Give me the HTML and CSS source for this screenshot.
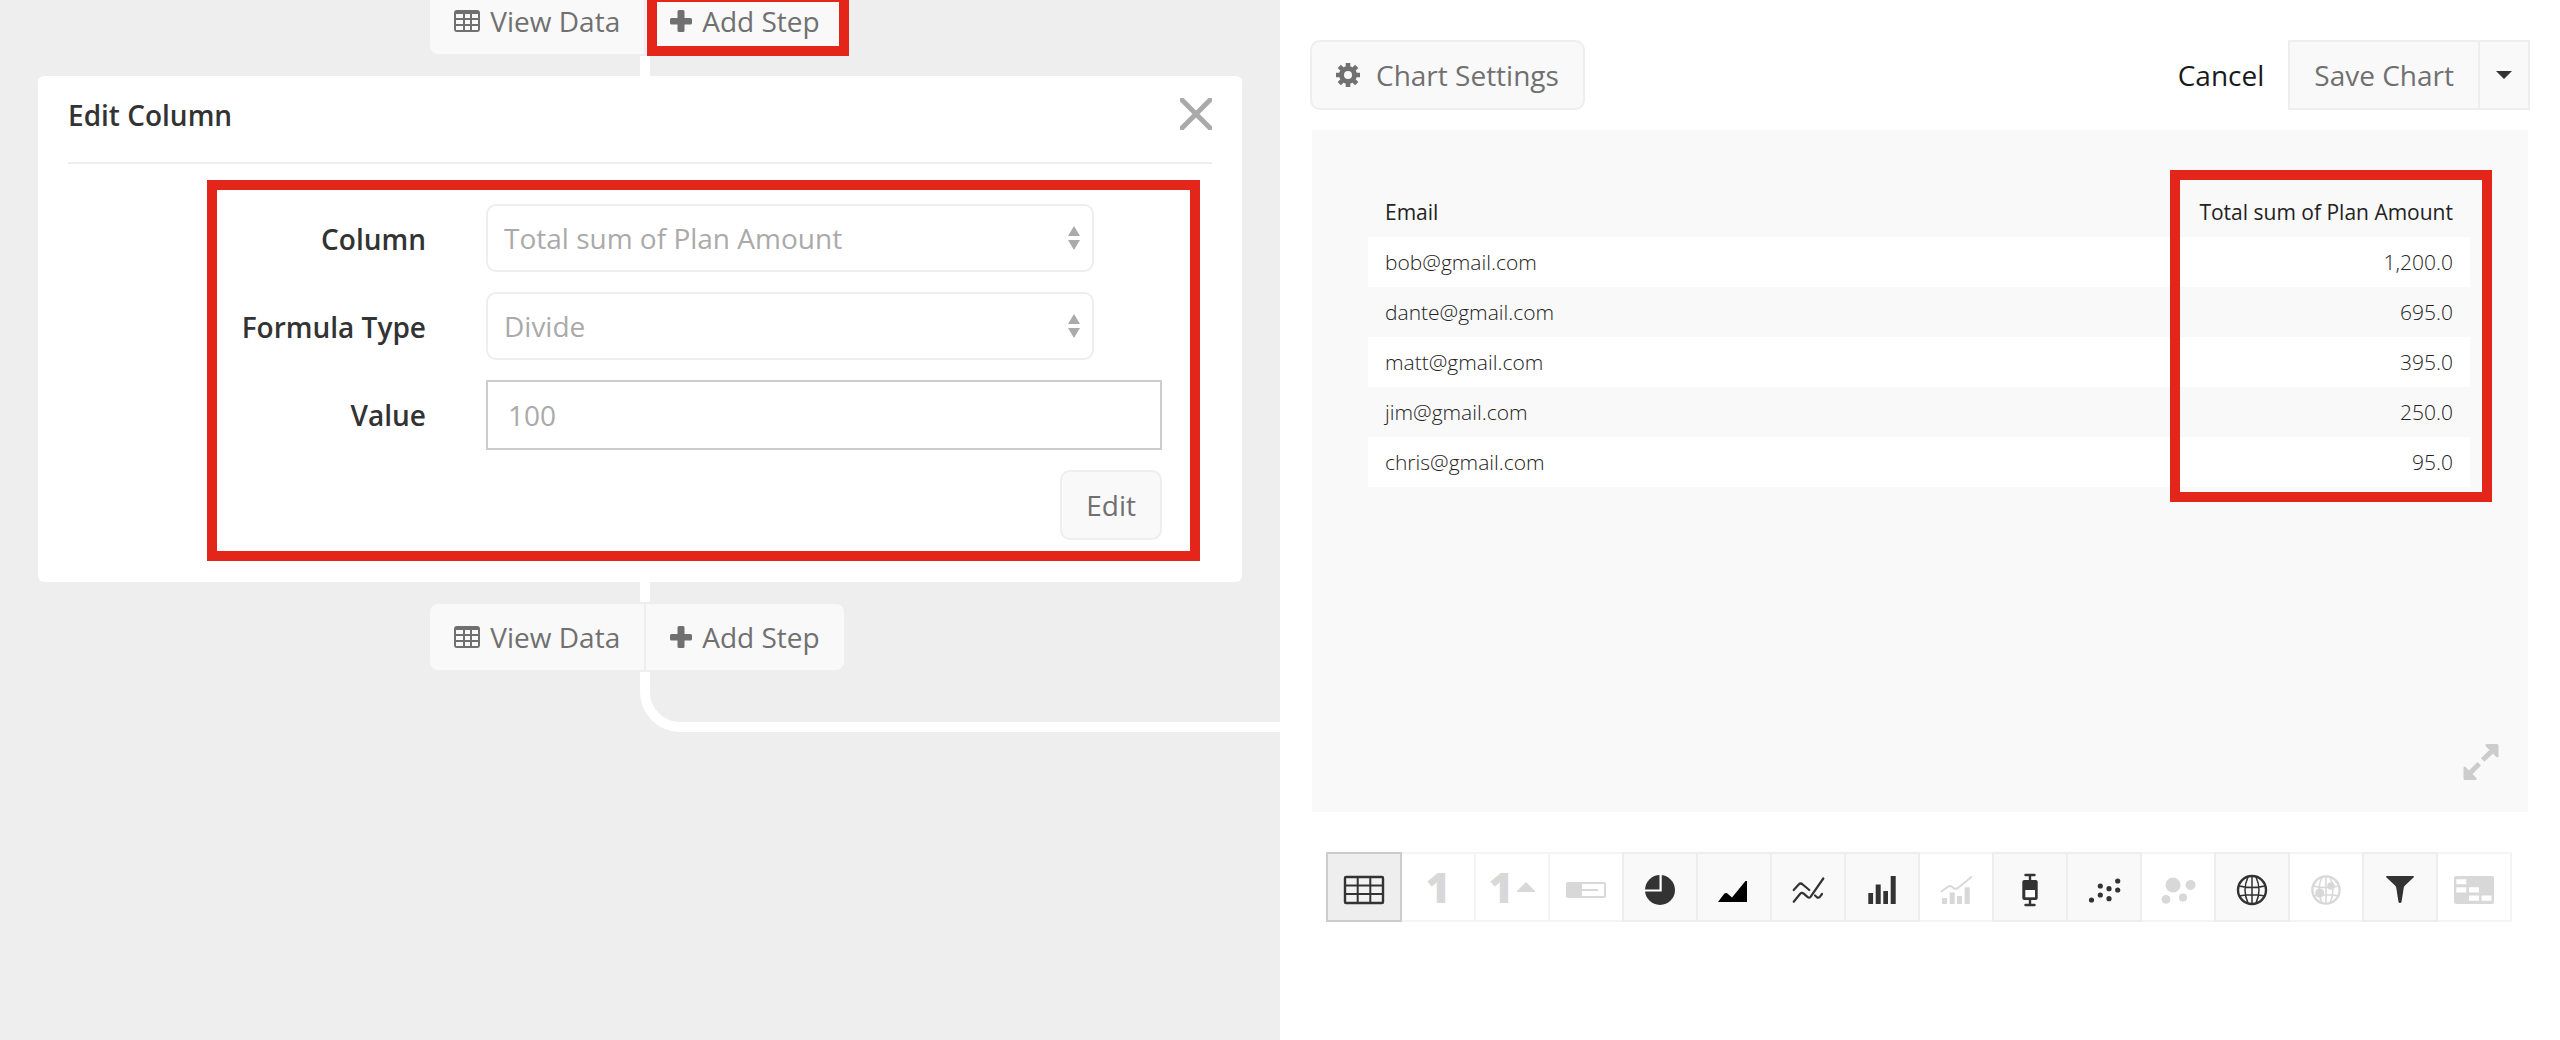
FILE: index.html
```html
<!DOCTYPE html>
<html lang="en">
<head>
<meta charset="utf-8">
<title>Edit Column</title>
<link rel="stylesheet" href="styles.css">
</head>
<body>
<svg class="sprite" aria-hidden="true">
  <symbol id="grid" viewBox="0 0 26 22"><path fill="currentColor" fill-rule="evenodd" d="M3 0h20a3 3 0 0 1 3 3v16a3 3 0 0 1-3 3H3a3 3 0 0 1-3-3V3a3 3 0 0 1 3-3zM2 4v4h7V4zm9 0v4h5V4zm7 0v4h6V4zM2 10v4h7v-4zm9 0v4h5v-4zm7 0v4h6v-4zM2 16v4h7v-4zm9 0v4h5v-4zm7 0v4h6v-4z"/></symbol>
  <symbol id="plus" viewBox="0 0 22 22"><path fill="currentColor" d="M9 0h4a1.500 1.500 0 0 1 1.500 1.500V8H20.500A1.500 1.500 0 0 1 22 9.500v3.500a1.500 1.500 0 0 1-1.500 1.500H14.500v6A1.500 1.500 0 0 1 13 22H9a1.500 1.500 0 0 1-1.500-1.500v-6H1.500A1.500 1.500 0 0 1 0 13V9.500A1.500 1.500 0 0 1 1.500 8H7.500V1.500A1.500 1.500 0 0 1 9 0z"/></symbol>
  <symbol id="sort" viewBox="0 0 12 24"><path fill="currentColor" d="M6 0l6 10H0zM6 24l6-10H0z"/></symbol>
</svg>
<div class="layout">
  <main class="pipeline">
    <div class="steps steps-first">
      <button class="step" type="button"><svg class="i-grid"><use href="#grid"/></svg>View Data</button>
      <button class="step marked" type="button"><svg class="i-plus"><use href="#plus"/></svg>Add Step</button>
    </div>
    <div class="connector"></div>
    <section class="card">
      <header class="card-head">
        <h1>Edit Column</h1>
        <button class="close" type="button" aria-label="Close"><svg width="32" height="32" viewBox="0 0 32 32"><path d="M2 2l28 28M30 2L2 30" stroke="currentColor" stroke-width="5" stroke-linecap="round"/></svg></button>
      </header>
      <form class="form">
        <label for="column">Column</label>
        <div class="select"><select id="column"><option>Total sum of Plan Amount</option></select><svg><use href="#sort"/></svg></div>
        <label for="formula">Formula Type</label>
        <div class="select"><select id="formula"><option>Divide</option></select><svg><use href="#sort"/></svg></div>
        <label for="value">Value</label>
        <input id="value" type="text" placeholder="100">
        <button class="btn submit" type="button">Edit</button>
      </form>
    </section>
    <div class="connector"></div>
    <div class="steps">
      <button class="step" type="button"><svg class="i-grid"><use href="#grid"/></svg>View Data</button>
      <button class="step" type="button"><svg class="i-plus"><use href="#plus"/></svg>Add Step</button>
    </div>
    <div class="connector-end"></div>
  </main>

  <aside class="chart">
    <header class="chart-head">
      <button class="btn settings" type="button"><svg width="24" height="24" viewBox="0 0 24 24"><g fill="none" stroke="currentColor"><circle cx="12" cy="12" r="6.500" stroke-width="5"/><path stroke-width="4.600" d="M12 0v6M12 18v6M0 12h6M18 12h6M3.300 3.300l4 4M16.700 16.700l4 4M20.700 3.300l-4 4M7.300 16.700l-4 4"/></g></svg>Chart Settings</button>
      <a class="cancel" href="#">Cancel</a>
      <div class="split">
        <button class="split-main" type="button">Save Chart</button>
        <button class="split-more" type="button" aria-label="More save options"><svg width="16" height="8" viewBox="0 0 16 8"><path fill="currentColor" d="M0 0h16L8 8z"/></svg></button>
      </div>
    </header>
    <div class="chart-body">
      <div class="table-wrap">
        <table>
          <thead><tr><th>Email</th><th>Total sum of Plan Amount</th></tr></thead>
          <tbody>
            <tr><td>bob@gmail.com</td><td>1,200.0</td></tr>
            <tr><td>dante@gmail.com</td><td>695.0</td></tr>
            <tr><td>matt@gmail.com</td><td>395.0</td></tr>
            <tr><td>jim@gmail.com</td><td>250.0</td></tr>
            <tr><td>chris@gmail.com</td><td>95.0</td></tr>
          </tbody>
        </table>
      </div>
      <button class="expand" type="button" aria-label="Expand"><svg width="36" height="36" viewBox="0 0 36 36"><path fill="currentColor" d="M24 0h10a1.500 1.500 0 0 1 1.500 1.500V12c0 1.500-1 2-2 1l-3.500-3.500-8.500 8.200-3.600-3.500L26.500 6 23 2.500C22 1.500 22.500 0 24 0zM12 36H2a1.500 1.500 0 0 1-1.500-1.500V24c0-1.500 1-2 2-1L6 26.500l8.500-8.500 3.500 3.500L9.500 30l3.500 3.500c1 1 .5 2.500-1 2.500z"/></svg></button>
    </div>
    <nav class="types" aria-label="Chart type">
      <button class="type current" type="button" aria-label="Table"><svg viewBox="0 0 72 66"><rect x="17" y="23" width="38" height="26" rx="1" fill="#f2f2f2" stroke="currentColor" stroke-width="2.400"/><path d="M29.700 23v26M42.300 23v26M17 31.500h38M17 40h38" stroke="currentColor" stroke-width="2"/></svg></button>
      <button class="type" type="button" disabled>1</button>
      <button class="type" type="button" disabled>1<svg class="delta" viewBox="0 0 18 10"><path fill="currentColor" d="M9 0l9 9v1H0V9z"/></svg></button>
      <button class="type" type="button" disabled aria-label="Progress"><svg viewBox="0 0 72 66"><rect x="17" y="29" width="38" height="14" rx="1" fill="none" stroke="currentColor" stroke-width="2"/><path fill="currentColor" d="M17 29h15v14H17zM32 35h16v2H32z"/></svg></button>
      <button class="type" type="button" aria-label="Pie"><svg viewBox="0 0 72 66"><circle cx="36" cy="36" r="15" fill="currentColor"/><path d="M36.600 20v16.500H20" fill="none" stroke="#fff" stroke-width="2.200"/></svg></button>
      <button class="type" type="button" aria-label="Area"><svg viewBox="0 0 72 66"><path fill="#000" d="M20 48l6-8q2-2 4 0l4 3.500L47.500 27H49v21z"/></svg></button>
      <button class="type" type="button" aria-label="Line"><svg viewBox="0 0 72 66"><path fill="none" stroke="currentColor" stroke-width="2.200" stroke-linecap="round" stroke-linejoin="round" d="M21.700 36l5-5.500q2-2 4 0L37.300 36M21.700 47.700l6.500-8q1.500-1.500 3.500 0l4 3.500q1.500 1 3-.5L51.300 24.500M43 41.500l2 1.800q1.500 1 3-.6l2-2.700"/></svg></button>
      <button class="type" type="button" aria-label="Bar"><svg viewBox="0 0 72 66"><path fill="currentColor" d="M22.300 39h4.800v11h-4.800zM29.700 30.500h5V50h-5zM37.300 37h4.700v13h-4.700zM44.700 22h5v28h-5z"/></svg></button>
      <button class="type" type="button" disabled aria-label="Bar and line"><svg viewBox="0 0 72 66"><path fill="currentColor" d="M22 44h5v6h-5zM29.700 38.500h5V50h-5zM37 42h5v8h-5zM44.700 33.300h5V50h-5z"/><path fill="none" stroke="currentColor" stroke-width="2" stroke-linecap="round" d="M21.700 37.300l6.300-4.500q2-1.500 4 0l2 1.500q2 1 4-.4L51.300 23"/></svg></button>
      <button class="type" type="button" aria-label="Box plot"><svg viewBox="0 0 72 66"><path fill="none" stroke="currentColor" stroke-width="2.400" stroke-linecap="round" d="M31.500 21h9M36 21v30M31.500 51h9"/><rect x="28.300" y="26" width="15.400" height="20" rx="2" fill="currentColor"/><path fill="#fff" d="M31.300 36h9.700v7.300h-9.700z"/></svg></button>
      <button class="type" type="button" aria-label="Scatter"><svg viewBox="0 0 72 66"><g fill="currentColor"><circle cx="23.500" cy="46" r="2.600"/><circle cx="32.300" cy="32" r="2.600"/><circle cx="32.300" cy="41" r="2.600"/><circle cx="41" cy="34.700" r="2.600"/><circle cx="41" cy="44.700" r="2.600"/><circle cx="49.700" cy="27" r="2.600"/><circle cx="49.700" cy="36" r="2.600"/></g></svg></button>
      <button class="type" type="button" disabled aria-label="Bubble"><svg viewBox="0 0 72 66"><g fill="currentColor"><circle cx="31" cy="31" r="7.500"/><circle cx="48.500" cy="31" r="5"/><circle cx="24" cy="45.300" r="4.400"/><circle cx="41" cy="43.500" r="4"/></g></svg></button>
      <button class="type" type="button" aria-label="Map"><svg viewBox="0 0 72 66"><g fill="none" stroke="currentColor"><circle cx="36" cy="36" r="14" stroke-width="2.400"/><path stroke-width="1.500" d="M36 22v28M32 23q-6 13 0 26M40 23q6 13 0 26M23 32q13 3 26 0M23 42q13-2.500 26 0"/></g></svg></button>
      <button class="type" type="button" disabled aria-label="Pin map"><svg viewBox="0 0 72 66"><g fill="none" stroke="currentColor"><circle cx="36" cy="36" r="13.600" stroke-width="2.400"/><path stroke-width="1.500" d="M36 22v28M32 23q-6 13 0 26M40 23q6 13 0 26M23 32q13 3 26 0M23 42q13-2.500 26 0"/></g><circle cx="29.700" cy="39" r="4.500" fill="currentColor"/><circle cx="41" cy="32" r="3.700" fill="currentColor"/></svg></button>
      <button class="type" type="button" aria-label="Funnel"><svg viewBox="0 0 72 66"><path fill="currentColor" d="M23 22h26q1 0 1 1l-9 8.500q-1 .8-1.200 2L37.500 48q-.2 1-1.500 1t-1.500-1l-2.300-14.500q-.2-1.200-1.200-2L22 23q0-1 1-1z"/></svg></button>
      <button class="type" type="button" disabled aria-label="Pivot table"><svg viewBox="0 0 72 66"><path fill="currentColor" fill-rule="evenodd" d="M18 22h36a2 2 0 0 1 2 2v24a2 2 0 0 1-2 2H18a2 2 0 0 1-2-2V24a2 2 0 0 1 2-2zM18.300 25.200v5h10v-5zM18.300 33.200v5.300h10v-5.300zM31 33.200v5.300h10v-5.300zM31 41.500v5.300h10v-5.300zM43.500 41.500v5.300h10v-5.300z"/></svg></button>
    </nav>
  </aside>
</div>
</body>
</html>
```
FILE: styles.css
```css
*, *::after { box-sizing: border-box; }

body {
  margin: 0;
  background: #fff;
  color: #333;
  font: 28px/38px "Open Sans", "Noto Sans", sans-serif;
}

button, input, select { font: inherit; margin: 0; }
button { cursor: pointer; }
svg { display: block; flex: none; }
.sprite { display: none; }

.layout {
  display: grid;
  grid-template-columns: 1fr 1fr;
  min-height: 100vh;
}

/* Pipeline */
.pipeline {
  background: #eee;
  overflow: hidden;
}

.steps {
  display: flex;
  justify-content: center;
  padding-right: 6px;
}
.steps-first { margin-top: -14px; }

.step {
  position: relative;
  display: flex;
  align-items: center;
  gap: 10px;
  height: 70px;
  padding: 0 24px;
  border: 2px solid #eee;
  border-radius: 0 10px 10px 0;
  background: #f9f9f9;
  color: #707070;
}
.step:first-child {
  margin-right: -2px;
  border-radius: 10px 0 0 10px;
}
.i-grid { width: 26px; height: 22px; }
.i-plus { width: 22px; height: 22px; }

.marked::after,
.table-wrap::after {
  content: "";
  position: absolute;
  border: 10px solid #e32619;
  pointer-events: none;
}
.marked::after { inset: 4px -5px -2px 1px; }

.connector {
  width: 10px;
  height: 20px;
  margin-left: 50%;
  background: #fff;
}
.connector-end {
  height: 60px;
  margin-left: 50%;
  border: solid #fff;
  border-width: 0 0 10px 10px;
  border-bottom-left-radius: 40px;
}

.card {
  margin: 0 38px;
  padding: 0 30px 21px;
  border-radius: 6px;
  background: #fff;
}
.card-head {
  display: flex;
  justify-content: space-between;
  height: 88px;
  padding-top: 20px;
  border-bottom: 2px solid #eee;
}
h1 {
  margin: 0;
  font-size: 28px;
  font-weight: 600;
}
.close {
  height: 36px;
  padding: 0;
  border: 0;
  background: none;
  color: #aaa;
}

.form {
  display: grid;
  grid-template-columns: 209px 1fr;
  column-gap: 60px;
  row-gap: 20px;
  margin: 16px 12px 0 139px;
  padding: 14px 28px 11px 0;
  border: 10px solid #e32619;
}
.form label {
  height: 68px;
  line-height: 70px;
  font-weight: 600;
  text-align: right;
}
.select {
  position: relative;
  width: 90%;
}
.select select {
  appearance: none;
  width: 100%;
  height: 68px;
  padding: 0 16px;
  border: 2px solid #eee;
  border-radius: 10px;
  background: #fff;
  color: #aaa;
}
.select svg {
  position: absolute;
  top: 22px;
  right: 14px;
  width: 12px;
  height: 24px;
  color: #aaa;
  pointer-events: none;
}
.form input {
  width: 100%;
  height: 70px;
  padding: 0 20px;
  border: 2px solid #ccc;
  border-radius: 0;
  background: #fff;
}
.form input::placeholder { color: #aaa; opacity: 1; }

.btn {
  height: 70px;
  padding: 0 24px;
  border: 2px solid #eee;
  border-radius: 10px;
  background: #f9f9f9;
  color: #707070;
}
.submit { grid-column: 2; justify-self: end; }

/* Chart */
.chart { padding: 40px 30px; }
.chart-head {
  display: flex;
  align-items: center;
  gap: 24px;
}
.settings {
  display: flex;
  align-items: center;
  gap: 16px;
}
.cancel {
  margin-left: auto;
  color: #1a1a1a;
  text-decoration: none;
}
.split { display: flex; }
.split-main,
.split-more {
  height: 70px;
  padding: 0 24px;
  border: 2px solid #eee;
  background: #f9f9f9;
  color: #707070;
}
.split-more {
  margin-left: -2px;
  padding: 0 16px;
  color: #333;
}

.chart-body {
  position: relative;
  height: 682px;
  margin: 20px 2px 40px;
  padding: 57px 58px 0 56px;
  background: #f9f9f9;
}
.table-wrap { position: relative; }
.table-wrap::after {
  top: -17px;
  right: -22px;
  bottom: -15px;
  width: 322px;
}
table {
  width: 100%;
  border-collapse: collapse;
  color: #222;
  font-size: 21px;
  line-height: 30px;
}
th, td {
  height: 50px;
  padding: 0 17px;
  text-align: left;
  font-weight: 300;
}
th { font-weight: 400; }
th:last-child, td:last-child { text-align: right; }
tbody tr:nth-child(odd) { background: #fff; }

.expand {
  position: absolute;
  right: 29px;
  bottom: 32px;
  padding: 0;
  border: 0;
  background: none;
  color: #ccc;
}

.types {
  display: flex;
  padding: 0 14px 0 16px;
}
.type {
  display: flex;
  flex: 0 0 76px;
  align-items: center;
  justify-content: center;
  gap: 4px;
  height: 70px;
  margin-right: -2px;
  padding: 0;
  border: 2px solid #eee;
  background: #f9f9f9;
  color: #333;
}
.type svg { width: 72px; height: 66px; }
.type .delta { width: 18px; height: 10px; }
.type:disabled {
  border-color: #f4f4f4;
  background: #fff;
  color: #d8d8d8;
  font-size: 42px;
  font-weight: 800;
  line-height: 42px;
  cursor: default;
}
.type:enabled { position: relative; }
.type.current {
  z-index: 1;
  border-color: #ccc;
  background: #eee;
}
```
